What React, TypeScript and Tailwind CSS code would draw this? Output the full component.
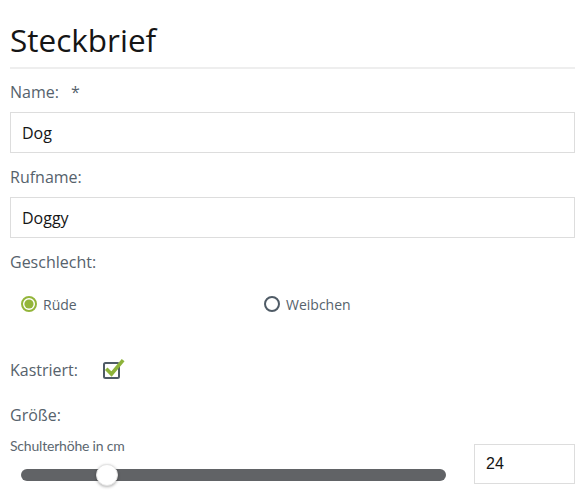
import React from "react";

const labelCls = "text-[16px] leading-6 text-[#56626c]";

const Radio: React.FC<{ checked?: boolean; label: string }> = ({ checked, label }) => {
  return (
    <label className="flex items-center gap-[6px] text-[14px] text-[#56626c]">
      <svg width="16" height="16" viewBox="0 0 16 16">
        {checked ? (
          <>
            <circle cx="8" cy="8" r="7" fill="#fff" stroke="#93b53a" strokeWidth="2" />
            <circle cx="8" cy="8" r="4.6" fill="#93b53a" />
          </>
        ) : (
          <circle cx="8" cy="8" r="7" fill="none" stroke="#4f5b66" strokeWidth="2" />
        )}
      </svg>
      {label}
    </label>
  );
};

const App: React.FC = () => {
  return (
    <div className="w-full bg-white px-[10px] font-['Open_Sans',sans-serif]">
      {/* Title */}
      <h1 className="pt-[21px] text-[31.5px] leading-[38px] text-[#151515]">Steckbrief</h1>
      <div className="mt-[8px] border-t-2 border-[#eeeeee]" />

      {/* Name */}
      <div className={`${labelCls} mt-[11px]`}>
        Name:<span className="ml-[12px]">*</span>
      </div>
      <div className="mt-[8px] flex h-[41px] items-center border border-[#dddddd] px-[11px] text-[16px] text-[#151515]">
        Dog
      </div>

      {/* Rufname */}
      <div className={`${labelCls} mt-[12px]`}>Rufname:</div>
      <div className="mt-[8px] flex h-[41px] items-center border border-[#dddddd] px-[11px] text-[16px] text-[#151515]">
        Doggy
      </div>

      {/* Geschlecht */}
      <div className={`${labelCls} mt-[12px]`}>Geschlecht:</div>
      <div className="mt-[18px] flex h-6 items-center pl-[11px]">
        <div className="w-[243px]">
          <Radio checked label="Rüde" />
        </div>
        <Radio label="Weibchen" />
      </div>

      {/* Kastriert */}
      <div className="mt-[42px] flex items-center">
        <span className={labelCls}>Kastriert:</span>
        <svg className="ml-[25px] -mt-[4px]" width="23" height="23" viewBox="0 0 23 23">
          <rect x="1" y="6" width="15" height="15" rx="1.5" fill="none" stroke="#4f5b66" strokeWidth="2" />
          <path d="M4.5 13 L8.5 17 L19 4.5" fill="none" stroke="#8db33a" strokeWidth="3.6" strokeLinecap="square" />
        </svg>
      </div>

      {/* Größe */}
      <div className={`${labelCls} mt-[21px]`}>Größe:</div>
      <div className="mt-[9px] flex">
        <div className="flex-1 pr-[28px]">
          <div className="font-['Lato',sans-serif] text-[14px] leading-5 tracking-[-0.2px] text-[#5c6770]">
            Schulterhöhe in cm
          </div>
          <div className="relative mt-[13px] ml-[11px] h-[12px] rounded-full bg-[#616366]">
            <div className="absolute top-1/2 left-[75px] h-[22px] w-[22px] -translate-y-1/2 rounded-full border border-[#e4e4e4] bg-white shadow-[0_1px_3px_rgba(0,0,0,0.3)]" />
          </div>
        </div>
        <div className="mt-[8px] flex h-[40px] w-[101px] items-center border border-[#dddddd] px-[11px] font-['Liberation_Sans',sans-serif] text-[16px] text-[#151515]">
          24
        </div>
      </div>
      <div className="h-[17px]" />
    </div>
  );
};

export default App;
